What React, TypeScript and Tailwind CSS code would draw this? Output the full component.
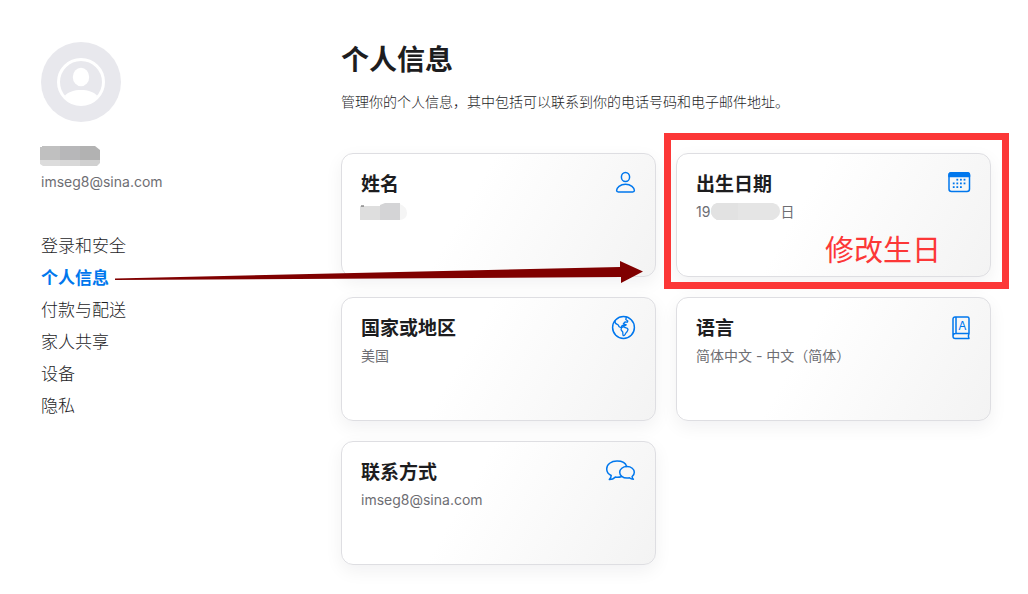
import type { ReactNode } from "react";

const navItems = ["登录和安全", "个人信息", "付款与配送", "家人共享", "设备", "隐私"];

function Icon({ children }: { children: ReactNode }) {
  return (
    <svg
      aria-hidden="true"
      viewBox="0 0 32 32"
      className="size-8 shrink-0 text-[#0077ed]"
      fill="none"
      stroke="currentColor"
      strokeWidth="1.5"
      strokeLinecap="round"
      strokeLinejoin="round"
    >
      {children}
    </svg>
  );
}

function PersonIcon() {
  return (
    <Icon>
      <ellipse cx="21.5" cy="11" rx="4.1" ry="4.6" />
      <path d="M14.3 26h14.4c1.1 0 1.7-.5 1.7-1.4 0-2.7-3.5-6.4-8.9-6.4s-8.9 3.7-8.9 6.4c0 .9.6 1.4 1.7 1.4z" />
    </Icon>
  );
}

const calendarDots = [
  [18.3, 13.7], [21.9, 13.7], [25.5, 13.7],
  [14.7, 17.4], [18.3, 17.4], [21.9, 17.4], [25.5, 17.4],
  [14.7, 21.1], [18.3, 21.1], [21.9, 21.1],
];

function CalendarIcon() {
  return (
    <Icon>
      <rect x="10" y="6.8" width="20.5" height="18.7" rx="2.5" />
      <path d="M10 10.5V9.3a2.5 2.5 0 0 1 2.5-2.5H28a2.5 2.5 0 0 1 2.5 2.5v1.2z" fill="currentColor" />
      {calendarDots.map(([x, y]) => (
        <rect key={`${x}-${y}`} x={x - 0.9} y={y - 0.9} width="1.8" height="1.8" fill="currentColor" stroke="none" />
      ))}
    </Icon>
  );
}

function GlobeIcon() {
  return (
    <Icon>
      <circle cx="19.5" cy="17.5" r="10.9" />
      <path
        strokeWidth="1.3"
        d="M11 10.8c-.2 1.7.5 3 2.4 3.6 1.1.3 1 1.6 1.8 2.3.7.6 1.5.7 2.500.9M22.400 7.100l-.6 2.400 2 1.500-.4 1.100M23.400 12.100L21 12l-1.600 1.800 2.900 1-1 .8-2.600-.2c-1 .5-1.500 1.200-1 2.200M17.700 17.600c1.200-.9 2.600-.9 3.600.1 1.200.2 2.500.8 2.700 1.500-.1 1.200-.6 2-1.200 2.900-.8.6-1.200 1.400-1.600 2.200-.6.8-1.200 1.400-1.900 1.300-.7-.5-.4-2-.5-3.300-.2-1-1.500-1.600-1.700-2.600 0-.8.1-1.500.6-2.100z"
      />
    </Icon>
  );
}

function BookIcon() {
  return (
    <Icon>
      <path d="M30 23.6V8.5a1.6 1.6 0 0 0-1.6-1.6H16a2 2 0 0 0-2 2v17.3a2.3 2.3 0 0 0 2.3 2.3H30M30 23.6H16.3a2.3 2.3 0 0 0-2.3 2.3M30 23.6c-.8 1.5-.8 3.3 0 4.9M17 7v16.6" />
      <text x="23.5" y="19.6" textAnchor="middle" fontSize="12" fontFamily="Inter, sans-serif" fill="currentColor" stroke="none">
        A
      </text>
    </Icon>
  );
}

function ChatIcon() {
  return (
    <Icon>
      <path d="M22.6 12.4C21.7 9 17.8 7 13 7 7.2 7 2.7 10.3 2.7 14.9c0 3 1.8 5.2 4.5 6.6 0 1.5-.8 2.9-1.9 4 2.6.1 4.6-1 6-2.4 1.9.3 4.1.2 6-.3" />
      <path d="M23 12.6c-4.2 0-7.3 2.5-7.3 5.7s3.1 5.8 7.3 5.8c.9 0 1.7-.1 2.4-.3 1 .9 2.3 1.5 4 1.5-.8-.7-1.3-1.6-1.3-2.7 1.4-1 2.2-2.5 2.2-4.3 0-3.2-3.1-5.7-7.3-5.7z" />
    </Icon>
  );
}

function Card({ title, icon, children }: { title: string; icon: ReactNode; children: ReactNode }) {
  return (
    <button
      type="button"
      className="flex min-h-[124px] w-full items-start justify-between rounded-xl border border-[#dedee2] bg-[linear-gradient(120deg,#fff_40%,#f3f3f3)] px-[19px] py-3 text-left shadow-[0_6px_18px_rgba(0,0,40,0.06)]"
    >
      <span className="flex flex-col pt-[5px]">
        <span className="text-[19px] leading-7 font-bold text-[#1d1d1f]">{title}</span>
        <span className="flex h-[26px] items-center text-sm leading-[26px] text-[#6e6e73]">{children}</span>
      </span>
      {icon}
    </button>
  );
}

export default function App() {
  return (
    <div className="relative flex bg-white pr-[37px] pb-7 pl-[41px] font-['Inter','Noto_Sans_CJK_SC',sans-serif] text-[#1d1d1f]">
      <aside className="w-[300px] shrink-0 pt-[42px]">
        <svg aria-hidden="true" viewBox="0 0 80 80" className="size-20">
          <circle cx="40" cy="40" r="40" fill="#e8e8ed" />
          <circle cx="40" cy="40" r="22.5" fill="none" stroke="#fff" strokeWidth="3" />
          <ellipse cx="40" cy="35" rx="8.2" ry="9.2" fill="#fff" />
          <path d="M24 53.5c3.5-3.6 9-5.5 16-5.5s12.5 1.9 16 5.5C52.5 60 47 63 40 63s-12.5-3-16-9.5z" fill="#fff" />
        </svg>
        <svg aria-hidden="true" viewBox="0 0 60 20" className="mt-6 -ml-px h-5 w-[60px]">
          <path d="M0 1h2V0h18v14H0z" fill="#c0c0c0" />
          <path d="M20 0h20v14H20z" fill="#b7b7b9" />
          <path d="M40 0h15l5 4v10H40z" fill="#b2b2b2" />
          <path d="M0 14h20v6H3l-3-2z" fill="#dcdcdc" />
          <path d="M20 14h20v6H20z" fill="#d8d8d8" />
          <path d="M40 14h20v3l-3 3H40z" fill="#d0d0d0" />
        </svg>
        <p className="mt-1 text-sm leading-6 text-[#6e6e73]">imseg8@sina.com</p>
        <nav className="mt-9">
          <ul>
            {navItems.map((item) => (
              <li key={item} className="text-[17px] leading-8">
                <a
                  href="#"
                  aria-current={item === "个人信息" ? "page" : undefined}
                  className={item === "个人信息" ? "font-bold text-[#0077ed]" : "font-light"}
                >
                  {item}
                </a>
              </li>
            ))}
          </ul>
        </nav>
      </aside>

      <main className="min-w-0 flex-1 pt-10">
        <h1 className="text-[28px] leading-10 font-bold">个人信息</h1>
        <p className="mt-2.5 text-sm leading-6 font-light">
          管理你的个人信息，其中包括可以联系到你的电话号码和电子邮件地址。
        </p>
        <div className="mt-[39px] grid grid-cols-2 gap-5">
          <Card title="姓名" icon={<PersonIcon />}>
            <svg aria-hidden="true" viewBox="0 0 48 18" className="-ml-px h-[18px] w-12">
              <path d="M0 3h20v14H0z" fill="#dedede" />
              <path d="M20 2l5-2h15v17H20z" fill="#d4d4d6" />
              <path d="M40 1q7 3 7 9t-7 7z" fill="#f5f5f5" />
              <path d="M1 3h3" stroke="#555" />
            </svg>
          </Card>
          <div className="relative">
            <Card title="出生日期" icon={<CalendarIcon />}>
              <span>19</span>
              <svg aria-hidden="true" viewBox="0 0 70 18" className="h-[18px] w-[70px]">
                <path d="M7 0h56q7 2 7 8t-7 9H7q-6-3-6-9t6-8z" fill="#e5e5e5" />
                <path d="M7 0q4-1 8 0h13v17H7q-6-3-6-9t6-8z" fill="#e2e2e2" />
              </svg>
              <span>日</span>
            </Card>
            <div className="pointer-events-none absolute -top-5 -right-[18px] -bottom-3 -left-3 border-[7px] border-[#fc3737]" />
            <span className="absolute right-[50px] bottom-1.5 text-[29px] leading-10 text-[#fc3737]">修改生日</span>
          </div>
          <Card title="国家或地区" icon={<GlobeIcon />}>美国</Card>
          <Card title="语言" icon={<BookIcon />}>简体中文 - 中文（简体）</Card>
          <Card title="联系方式" icon={<ChatIcon />}>imseg8@sina.com</Card>
        </div>
      </main>

      <svg
        aria-hidden="true"
        viewBox="0 0 530 24"
        className="pointer-events-none absolute top-[260px] left-[114px] h-6 w-[530px]"
      >
        <path d="M1 18.5L506 7V1l23 10.5L507 23v-6L1 20z" fill="#800000" />
      </svg>
    </div>
  );
}
